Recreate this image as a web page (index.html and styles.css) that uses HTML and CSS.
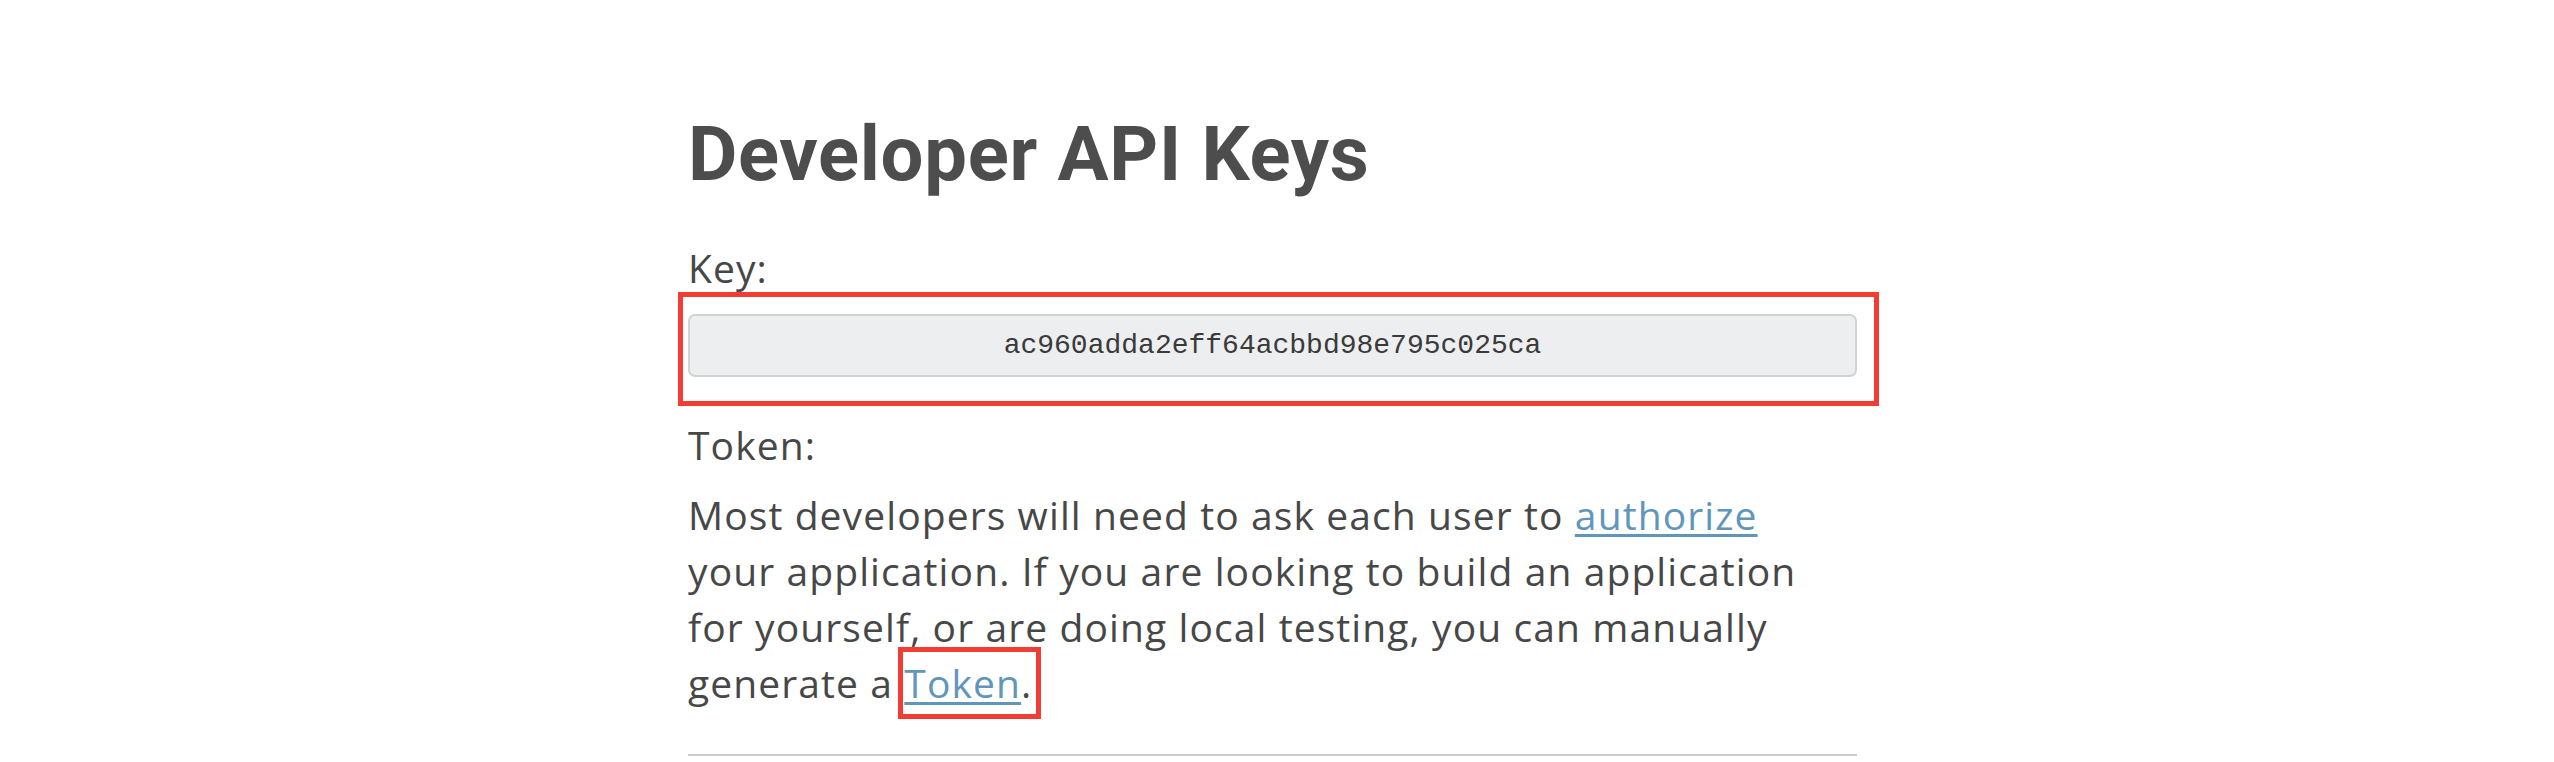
FILE: index.html
```html
<!DOCTYPE html>
<html lang="en">
<head>
<meta charset="utf-8">
<title>Developer API Keys</title>
<link rel="stylesheet" href="styles.css">
</head>
<body>
<main class="page">
  <section class="content">
    <h1 class="title">Developer API Keys</h1>
    <div class="label">Key:</div>
    <div class="key-wrap">
      <input class="key-field" type="text" readonly value="ac960adda2eff64acbbd98e795c025ca">
      <span class="highlight highlight-key"></span>
    </div>
    <div class="label label-token">Token:</div>
    <p class="text">Most developers will need to ask each user to <a class="link" href="#">authorize</a> your application. If you are looking to build an application for yourself, or are doing local testing, you can manually generate a <a class="link link-token" href="#">Token<span class="highlight highlight-token"></span></a>.</p>
    <hr class="rule">
  </section>
</main>
</body>
</html>
```

FILE: styles.css
```css
html, body {
  margin: 0;
  padding: 0;
  background: #ffffff;
}

.page {
  display: flex;
  justify-content: center;
  padding: 109px 9px 0 0;
  font-family: "Open Sans", "Noto Sans", sans-serif;
  color: #474747;
}

.content {
  width: 1169px;
  display: flex;
  flex-direction: column;
}

.title {
  margin: 0;
  font-family: Roboto, "Noto Sans", sans-serif;
  font-weight: 700;
  font-size: 76px;
  line-height: 90px;
  letter-spacing: 0.7px;
  color: #4d4d4d;
  white-space: nowrap;
}

.label {
  margin-top: 41px;
  font-size: 39px;
  line-height: 56px;
  letter-spacing: 1.1px;
}

.key-wrap {
  position: relative;
  margin-top: 18px;
}

.key-field {
  display: block;
  box-sizing: border-box;
  width: 100%;
  height: 63px;
  margin: 0;
  padding: 0 12px;
  border: 2px solid #cfd3d6;
  border-radius: 7px;
  background: #edeef0;
  font-family: "Liberation Mono", "Courier New", monospace;
  font-size: 28px;
  color: #3a3a3a;
  text-align: center;
  outline: none;
}

.label-token {
  margin-top: 40px;
}

.text {
  margin: 14px 0 0;
  max-width: 1125px;
  font-size: 39px;
  line-height: 56px;
  letter-spacing: 1.1px;
}

.link {
  color: #6096ba;
  text-decoration: underline;
  text-decoration-thickness: 3px;
  text-underline-offset: 4px;
}

.link-token {
  position: relative;
}

.highlight {
  position: absolute;
  box-sizing: border-box;
  border: 5px solid #f13d33;
  pointer-events: none;
}

.highlight-key {
  left: -10px;
  top: -22px;
  right: -22px;
  bottom: -29px;
}

.highlight-token {
  left: -6px;
  right: -20px;
  top: -9px;
  bottom: -10px;
}

.rule {
  margin: 43px 0 0;
  border: 0;
  border-top: 2px solid #cccccc;
  height: 0;
}
```
